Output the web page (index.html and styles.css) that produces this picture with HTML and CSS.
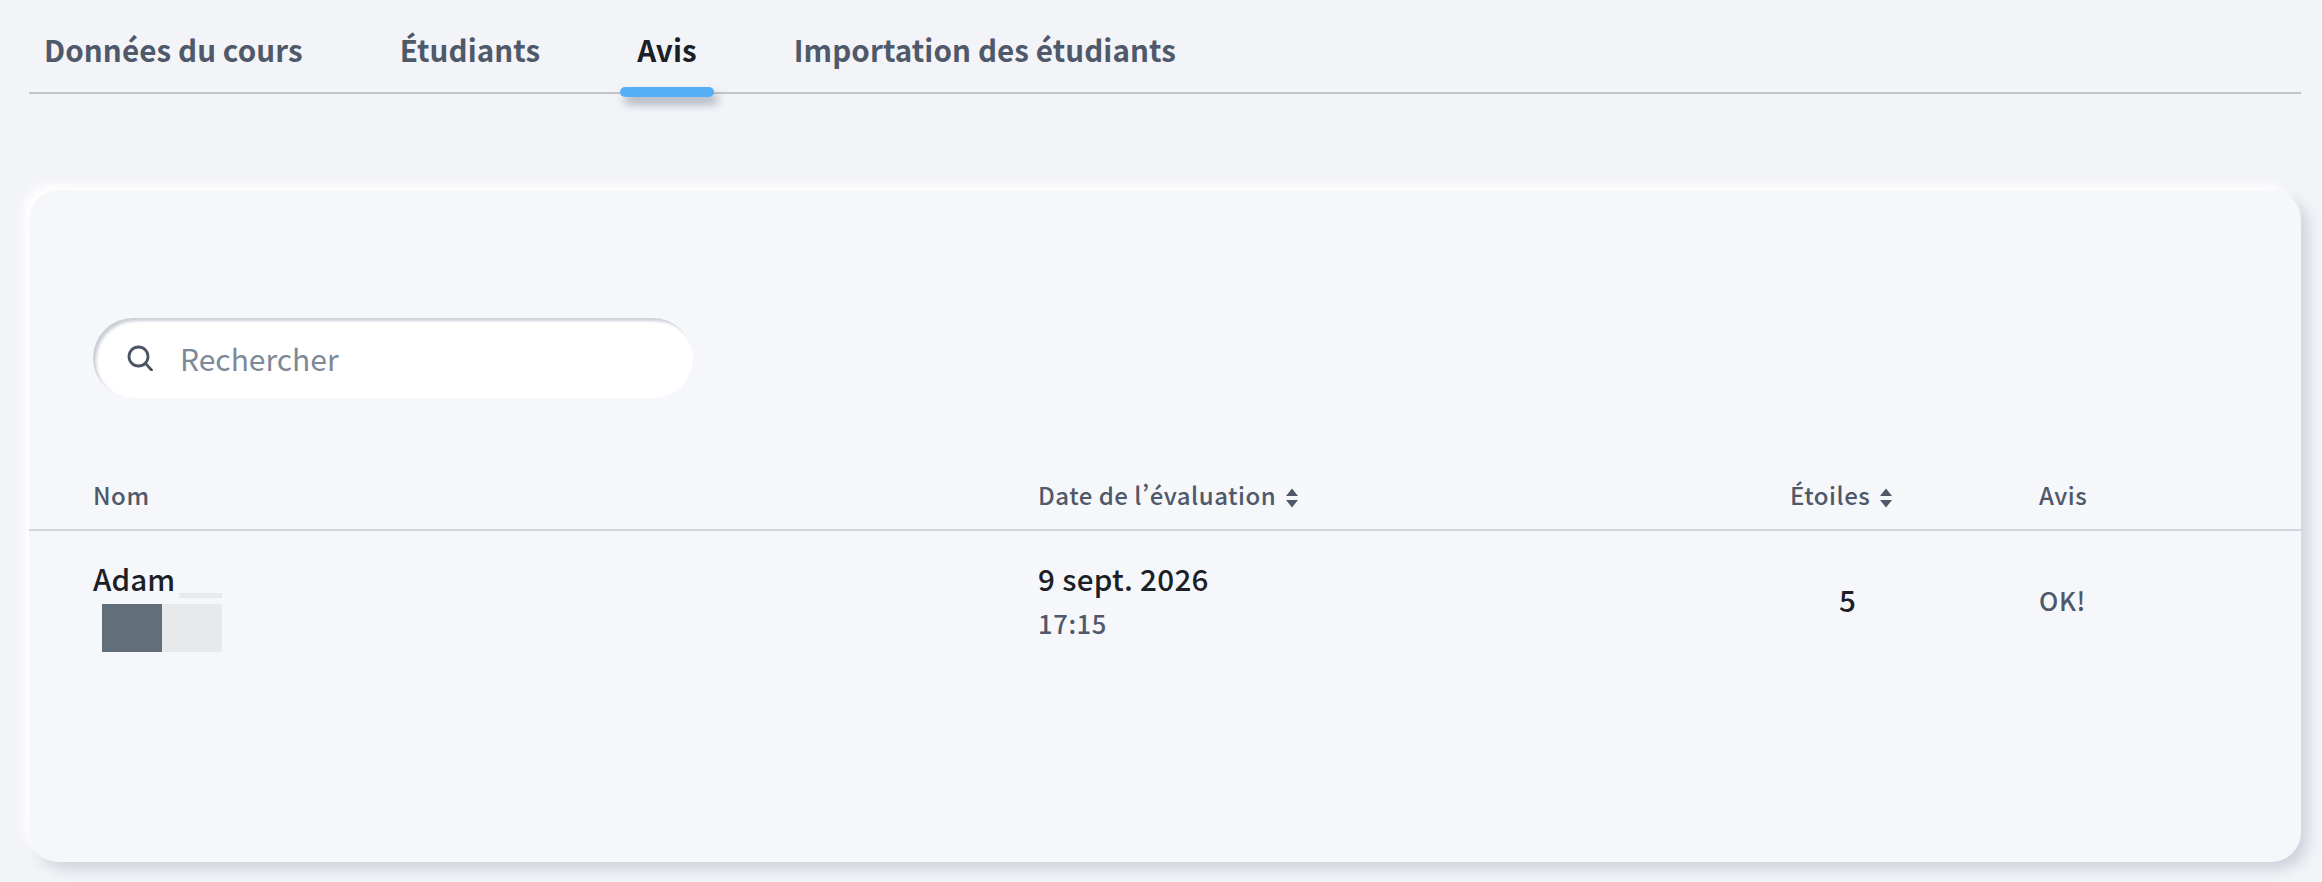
FILE: index.html
```html
<!DOCTYPE html>
<html lang="fr">
<head>
<meta charset="utf-8">
<title>Avis</title>
<link rel="stylesheet" href="styles.css">
</head>
<body>
<nav class="tabs">
  <a class="tab">Données du cours</a>
  <a class="tab">Étudiants</a>
  <a class="tab active">Avis</a>
  <a class="tab">Importation des étudiants</a>
</nav>
<main class="card">
  <div class="search">
    <svg class="search-icon" viewBox="0 0 26 26" fill="none" stroke="#4a5464" stroke-width="2.8" stroke-linecap="round"><circle cx="11.5" cy="11.5" r="9.5"/><path d="M18.4 18.4 24.5 25"/></svg>
    <span class="placeholder">Rechercher</span>
  </div>
  <div class="row head">
    <div>Nom</div>
    <div>Date de l’évaluation <svg class="sort" viewBox="0 0 14 22"><path d="M7 1.5 13 9H1zM7 20.5 1 13h12z"/></svg></div>
    <div>Étoiles <svg class="sort" viewBox="0 0 14 22"><path d="M7 1.5 13 9H1zM7 20.5 1 13h12z"/></svg></div>
    <div>Avis</div>
  </div>
  <div class="row body">
    <div class="name-cell">
      <div class="name">Adam</div>
      <div class="stub"></div>
      <div class="blocks"><span class="dark"></span><span class="light"></span></div>
    </div>
    <div>
      <div class="date">9 sept. 2026</div>
      <div class="time">17:15</div>
    </div>
    <div class="stars">5</div>
    <div class="review">OK!</div>
  </div>
</main>
</body>
</html>
```
FILE: styles.css
```css
* { box-sizing: border-box; }
html, body { margin: 0; height: 100%; }
body {
  width: 2322px;
  height: 882px;
  overflow: hidden;
  background: #f3f4f8;
  font-family: "Noto Sans CJK SC", "Noto Sans", sans-serif;
  font-variant-east-asian: proportional-width;
  padding: 0 21px 0 29px;
}
.tabs {
  display: flex;
  gap: 97px;
  height: 94px;
  padding: 28px 0 0 15px;
  border-bottom: 2px solid #c3c4cb;
}
.tab {
  position: relative;
  font-size: 29.6px;
  line-height: 44px;
  font-weight: 700;
  color: #4f596a;
  letter-spacing: 0.08px;
}
.tab.active { color: #1b2027; }
.tab.active::after {
  content: "";
  position: absolute;
  left: -17px;
  right: -17px;
  top: 59px;
  height: 10px;
  border-radius: 5px;
  background: #55aef6;
  box-shadow: 4px 7px 10px rgba(60, 70, 90, 0.4);
}
.card {
  margin-top: 96px;
  height: 672px;
  border-radius: 30px;
  background: #f5f7fb;
  padding-top: 128px;
  box-shadow: -6px -6px 10px #ffffff, 7px 7px 14px rgba(150, 158, 175, 0.4);
}
.search {
  display: flex;
  align-items: center;
  width: 600px;
  height: 80px;
  margin-left: 64px;
  border-radius: 40px;
  background: #ffffff;
  box-shadow: inset 3px 3px 3px rgba(150, 158, 175, 0.5);
  padding-left: 34px;
}
.search-icon { width: 26px; height: 26px; margin-right: 27px; }
.placeholder { font-size: 30px; color: #7d8998; }
.row {
  display: grid;
  grid-template-columns: 945px 752px 249px 1fr;
  padding-left: 64px;
}
.head {
  margin-top: 79px;
  height: 54px;
  border-bottom: 2px solid #d4d6dd;
  font-size: 24px;
  line-height: 36px;
  font-weight: 500;
  letter-spacing: 0.5px;
  color: #4f596a;
}
.sort { width: 14px; height: 22px; margin-left: 3px; fill: #4f596a; vertical-align: -4px; }
.body { padding-top: 26px; color: #1b2027; }
.name { font-size: 29.6px; line-height: 44px; font-weight: 500; letter-spacing: 0.1px; }
.name-cell { position: relative; }
.stub { position: absolute; left: 86px; top: 36px; width: 43px; height: 5px; background: #e9eaee; }
.blocks { display: flex; margin: 3px 0 0 9px; }
.blocks span { width: 60px; height: 48px; }
.dark { background: #636e7b; }
.light { background: #e8e9ed; }
.date { font-size: 29.6px; line-height: 44px; font-weight: 500; letter-spacing: 0.3px; }
.time { font-size: 25.6px; line-height: 36px; margin-top: 4px; font-weight: 500; letter-spacing: 0.6px; color: #4f596a; }
.stars { font-size: 29.6px; line-height: 44px; font-weight: 500; padding: 21px 0 0 49px; }
.review { font-size: 25.6px; line-height: 36px; font-weight: 500; letter-spacing: 0.6px; color: #4f596a; padding-top: 25px; }
```
